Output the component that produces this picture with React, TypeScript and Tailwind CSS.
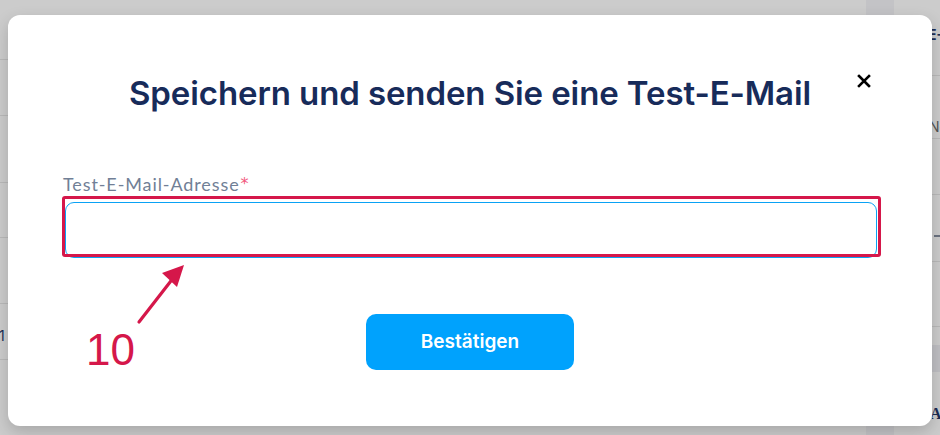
import React from 'react';

const leftRows = [60, 56, 67, 55, 66, 56];

export default function App() {
  return (
    <div className="relative w-[940px] h-[435px] overflow-hidden bg-[#cccccc] font-['Inter',sans-serif]">
      {/* dimmed page behind the dialog */}
      <div className="flex h-full">
        <div className="w-[8px] flex flex-col">
          {leftRows.map((h, i) => (
            <div
              key={i}
              style={{ height: h }}
              className="border-b border-[#b9b9b9] flex items-end pb-[16px] text-[14px] text-[#1c2d55] leading-none overflow-hidden"
            >
              {i === 5 ? <span className="-ml-[1px]">1</span> : null}
            </div>
          ))}
        </div>
        <div className="flex-1 flex">
          <div className="flex-1" />
          <div className="w-[28px] bg-[#c3c3c6]" />
          <div className="w-[38px]" />
        </div>
        <div className="w-[8px] flex flex-col overflow-hidden text-[#1c2d55]">
          <div style={{ height: 76 }} className="border-b border-[#b9b9b9] pt-[28px] text-[14px] font-bold leading-none -ml-[4px]">E-</div>
          <div style={{ height: 63 }} className="border-b border-[#b9b9b9] pt-[44px] text-[14px] text-[#555] leading-none -ml-[3px]">No</div>
          <div style={{ height: 56 }} className="border-b border-[#b9b9b9]" />
          <div style={{ height: 67 }} className="border-b border-[#b9b9b9] pt-[40px]">
            <div className="h-[2px] w-[8px] bg-[#6b7280] ml-[2px]" />
          </div>
          <div style={{ height: 65 }} className="border-b border-[#b9b9b9]" />
          <div className="h-[18px]" />
          <div className="h-[27px] bg-[#bfbfc3]" />
          <div className="pt-[34px] text-[16px] font-bold font-['Liberation_Serif',serif] leading-none -ml-[2px]">Ar</div>
        </div>
      </div>

      {/* dialog */}
      <div className="absolute left-[8px] top-[15px] w-[924px] h-[411px] rounded-[12px] bg-white shadow-[0_6px_16px_rgba(0,0,0,0.18)] flex flex-col px-[55px] pt-[58px]">
        <button className="absolute right-[56px] top-[54px] w-6 h-6 flex items-center justify-center">
          <svg width="14" height="14" viewBox="0 0 14 14" fill="none" stroke="#000" strokeWidth="2.6" strokeLinecap="square">
            <path d="M2 2 L12 12 M12 2 L2 12" />
          </svg>
        </button>

        <h2 className="text-center text-[33px] leading-[40px] font-semibold text-[#172b5a] tracking-[-0.1px]">
          Speichern und senden Sie eine Test-E-Mail
        </h2>

        <label className="mt-[60px] h-[22px] text-[18px] leading-[22px] tracking-[0.9px] text-[#717f96] font-['Lato',sans-serif]">
          Test-E-Mail-Adresse<span className="text-[#f2587e] ml-[1px] relative -top-[2px] text-[16px] leading-none font-['DejaVu_Sans',sans-serif]">*</span>
        </label>

        <div className="relative mt-[7px] ml-[2px]">
          <input className="block w-full h-[56px] rounded-[9px] border border-[#0aa2f5] outline-none" />
          {/* annotation frame */}
          <div className="absolute -left-[3px] -top-[6px] w-[819px] h-[61px] rounded-[3px] border-[3.5px] border-[#d5174a]" />
        </div>

        <div className="relative flex justify-center mt-[56px]">
          <button className="w-[208px] h-[56px] rounded-[10px] bg-[#00a2fd] text-white text-[19px] font-semibold">
            Bestätigen
          </button>
          {/* annotation arrow + number */}
          <svg className="absolute left-[65px] -top-[50px]" width="60" height="70" viewBox="0 0 60 70" fill="none">
            <path d="M11 58 L46 13" stroke="#d5174a" strokeWidth="3.2" strokeLinecap="round" />
            <path d="M56 1 L34 9 L49 23 Z" fill="#d5174a" />
          </svg>
          <span className="absolute left-[23px] top-[14px] text-[44px] leading-none text-[#d5174a] font-['Liberation_Sans',Arial,sans-serif]">
            10
          </span>
        </div>
      </div>
    </div>
  );
}
